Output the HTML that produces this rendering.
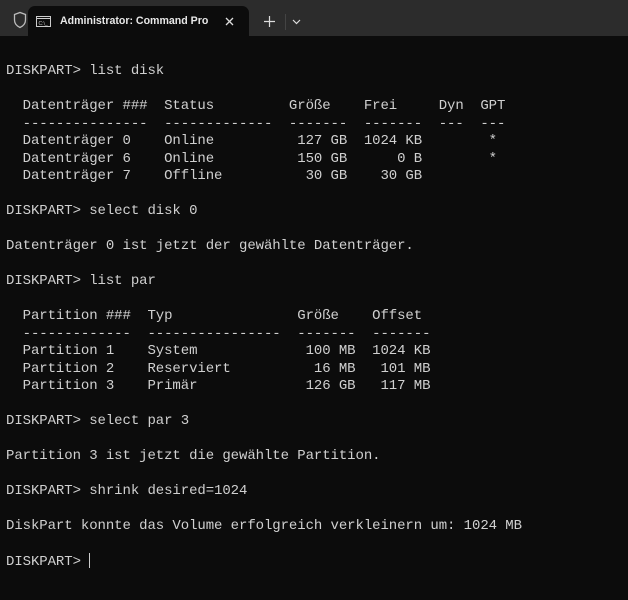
<!DOCTYPE html>
<html><head><meta charset="utf-8"><style>
html,body{margin:0;padding:0;width:628px;height:600px;background:#0c0c0c;overflow:hidden}
.bar{position:absolute;left:0;top:0;width:628px;height:36px;background:#2c2c2c}
.tab{position:absolute;left:28px;top:6px;width:221px;height:30px;background:#0c0c0c;border-radius:7px 7px 0 0}
.t{position:absolute;font-family:"Liberation Sans",sans-serif;font-size:10.6px;font-weight:bold;color:#e8e8e8;left:60px;top:15px}
pre{position:absolute;left:6px;top:63px;margin:0;font-family:"Liberation Mono",monospace;font-size:14px;letter-spacing:-0.08px;line-height:17.5px;color:#d0d0d0}
.cur{display:inline-block;width:1px;height:15px;background:#ccc;vertical-align:-3px}
</style></head><body>
<div class="bar"></div>
<div class="tab"></div>
<svg style="position:absolute;left:0;top:0" width="628" height="36">
<path d="M14.5 14.5 L20 12.5 L25.5 14.5 V20 Q25.5 25 20 27.5 Q14.5 25 14.5 20 Z" fill="none" stroke="#bbb" stroke-width="1.3"/>
<rect x="36.5" y="16.5" width="14" height="10" fill="none" stroke="#ccc" stroke-width="1"/>
<line x1="36.5" y1="18.5" x2="50.5" y2="18.5" stroke="#ccc"/>
<text x="38.5" y="25" font-size="5" fill="#ccc" font-family="Liberation Sans">C:\_</text>
<path d="M226 18 L233 25 M233 18 L226 25" stroke="#ddd" stroke-width="1.3"/>
<path d="M269.5 16 V27 M264 21.5 H275" stroke="#ddd" stroke-width="1.2"/>
<line x1="285.5" y1="14" x2="285.5" y2="30" stroke="#444"/>
<path d="M293 20 L296.5 23.5 L300 20" fill="none" stroke="#ddd" stroke-width="1.2"/>
</svg>
<div class="t">Administrator: Command Pro</div>
<pre>DISKPART&gt; list disk

  Datenträger ###  Status         Größe    Frei     Dyn  GPT
  ---------------  -------------  -------  -------  ---  ---
  Datenträger 0    Online          127 GB  1024 KB        *
  Datenträger 6    Online          150 GB      0 B        *
  Datenträger 7    Offline          30 GB    30 GB

DISKPART&gt; select disk 0

Datenträger 0 ist jetzt der gewählte Datenträger.

DISKPART&gt; list par

  Partition ###  Typ               Größe    Offset
  -------------  ----------------  -------  -------
  Partition 1    System             100 MB  1024 KB
  Partition 2    Reserviert          16 MB   101 MB
  Partition 3    Primär             126 GB   117 MB

DISKPART&gt; select par 3

Partition 3 ist jetzt die gewählte Partition.

DISKPART&gt; shrink desired=1024

DiskPart konnte das Volume erfolgreich verkleinern um: 1024 MB

DISKPART&gt; <span class="cur"></span></pre>
</body></html>
